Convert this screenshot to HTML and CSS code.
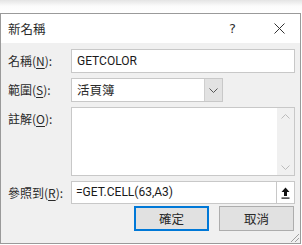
FILE: index.html
```html
<!DOCTYPE html>
<html lang="zh-Hant">
<head>
<meta charset="utf-8">
<link rel="stylesheet" href="styles.css">
</head>
<body>
<div class="page">
  <div class="dialog">
    <div class="titlebar">
      <span class="title">新名稱</span>
      <span class="help">?</span>
      <svg class="close" width="11" height="11" viewBox="0 0 11 11"><path d="M0.5 0.5L10.5 10.5M10.5 0.5L0.5 10.5" stroke="#333" stroke-width="1" fill="none"/></svg>
    </div>
    <div class="content">
      <div class="form">
        <label class="lbl">名稱(<u>N</u>):</label>
        <div class="field text">GETCOLOR</div>

        <label class="lbl">範圍(<u>S</u>):</label>
        <div class="combo">
          <div class="combo-text">活頁簿</div>
          <div class="combo-btn"><svg width="9" height="5" viewBox="0 0 9 5"><path d="M0.5 0.5L4.5 4.5L8.5 0.5" stroke="#555" fill="none"/></svg></div>
        </div>

        <label class="lbl">註解(<u>O</u>):</label>
        <div class="memo">
          <div class="memo-body"></div>
          <div class="scroll">
            <svg width="9" height="5" viewBox="0 0 9 5"><path d="M0.5 4.5L4.5 0.5L8.5 4.5" stroke="#bbb" fill="none"/></svg>
            <svg width="9" height="5" viewBox="0 0 9 5"><path d="M0.5 0.5L4.5 4.5L8.5 0.5" stroke="#bbb" fill="none"/></svg>
          </div>
        </div>

        <label class="lbl">參照到(<u>R</u>):</label>
        <div class="ref">
          <div class="ref-text">=GET.CELL(63,A3)</div>
          <div class="ref-btn"><svg width="9" height="12" viewBox="0 0 9 12"><path d="M4.5 0.5L8.5 5H6V9H3V5H0.5Z" fill="#111"/><rect x="0.5" y="10.5" width="8" height="1.2" fill="#111"/></svg></div>
        </div>
      </div>
      <div class="buttons">
        <button class="btn default">確定</button>
        <button class="btn">取消</button>
      </div>
      <div class="grip"></div>
    </div>
  </div>
</div>
</body>
</html>
```
FILE: styles.css
```css
html, body {
  margin: 0;
  padding: 0;
  background: #ffffff;
}
.page {
  padding-top: 13px;
  width: 302px;
  height: 245px;
  box-sizing: border-box;
  background: linear-gradient(#e4e4e4, #fbfbfb 6px, #ffffff 13px);
}
.dialog {
  width: 301px;
  height: 231px;
  box-sizing: border-box;
  border: 1px solid #9a9a9a;
  background: #f0f0f0;
  font-family: "Noto Sans CJK TC", "Noto Sans", sans-serif;
  font-size: 12px;
  color: #2a2a2a;
  display: flex;
  flex-direction: column;
}
.titlebar {
  height: 29px;
  background: #ffffff;
  display: flex;
  align-items: center;
  padding-left: 7px;
  padding-right: 15px;
  flex-shrink: 0;
}
.title {
  font-size: 12.5px;
  flex: 1;
  color: #2a2a2a;
}
.help {
  font-family: "DejaVu Sans", sans-serif;
  font-size: 13px;
  color: #333;
  margin-right: 38px;
}
.close { display: block; }
.content {
  flex: 1;
  position: relative;
  padding: 6px 5px 0 7px;
}
.form {
  display: grid;
  grid-template-columns: 63px 224px;
  grid-template-rows: 24px 24px 69px 22px;
  row-gap: 5px;
  align-items: start;
}
.lbl {
  line-height: 24px;
  height: 24px;
  white-space: nowrap;
  color: #2a2a2a;
}
.lbl u { text-decoration-thickness: 1px; text-underline-offset: 2px; }
.field, .combo, .memo, .ref {
  box-sizing: border-box;
  border: 1px solid #c8c8c8;
  background: #ffffff;
}
.text {
  height: 24px;
  line-height: 22px;
  padding-left: 5px;
  font-size: 12px;
  font-family: Roboto, "Noto Sans CJK TC", sans-serif;
  color: #1a1a1a;
}
.combo {
  width: 152px;
  height: 24px;
  display: flex;
}
.combo-text {
  flex: 1;
  line-height: 22px;
  padding-left: 5px;
  font-size: 12.5px;
}
.combo-btn {
  width: 17px;
  background: #e2e2e2;
  border-left: 1px solid #cfcfcf;
  display: flex;
  align-items: center;
  justify-content: center;
}
.memo {
  height: 69px;
  display: flex;
}
.memo-body { flex: 1; }
.scroll {
  width: 17px;
  background: #f0f0f0;
  display: flex;
  flex-direction: column;
  justify-content: space-between;
  align-items: center;
  padding: 6px 0 5px;
}
.scroll svg { display: block; }
.ref {
  height: 23px;
  display: flex;
}
.ref-text {
  flex: 1;
  line-height: 21px;
  padding-left: 4px;
  font-size: 12px;
  font-family: Roboto, "Noto Sans CJK TC", sans-serif;
  color: #1a1a1a;
}
.ref-btn {
  width: 17px;
  border-left: 1px solid #c8c8c8;
  display: flex;
  align-items: center;
  justify-content: center;
}
.buttons {
  display: flex;
  justify-content: flex-end;
  gap: 10px;
  margin-top: 3px;
  padding-right: 1px;
}
.btn {
  width: 75px;
  height: 25px;
  box-sizing: border-box;
  border: 1px solid #adadad;
  background: #e1e1e1;
  font-family: "Noto Sans CJK TC", sans-serif;
  font-size: 12.5px;
  color: #2a2a2a;
  padding: 0;
}
.btn.default {
  border: 1px solid #0078d7;
  box-shadow: inset 0 0 0 1px #0078d7;
}
.grip {
  position: absolute;
  right: 1px;
  bottom: 1px;
  width: 10px;
  height: 10px;
  background: repeating-linear-gradient(135deg, transparent 0 2px, #a0a0a0 2px 3px);
  clip-path: polygon(100% 0, 100% 100%, 0 100%);
}
```
